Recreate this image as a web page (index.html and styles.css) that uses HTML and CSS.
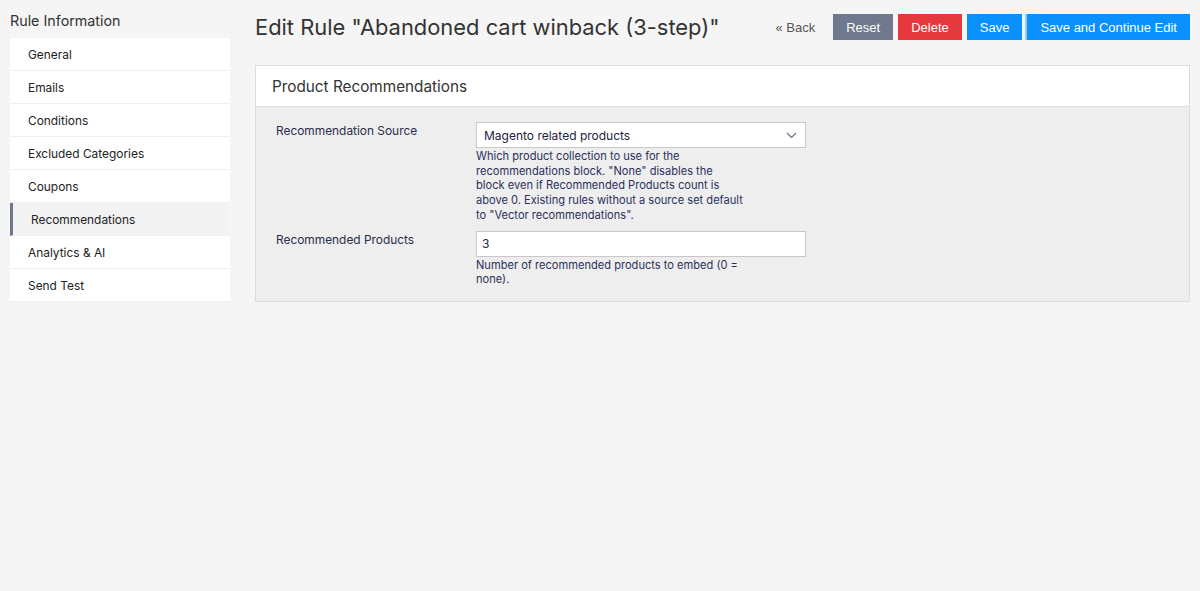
FILE: index.html
```html
<!DOCTYPE html>
<html>
<head>
<meta charset="utf-8">
<link rel="stylesheet" href="styles.css">
</head>
<body>
<div class="page">
  <aside class="sidebar">
    <div class="side-title">Rule Information</div>
    <nav class="side-nav">
      <div class="nav-item">General</div>
      <div class="nav-item">Emails</div>
      <div class="nav-item">Conditions</div>
      <div class="nav-item">Excluded Categories</div>
      <div class="nav-item">Coupons</div>
      <div class="nav-item active">Recommendations</div>
      <div class="nav-item">Analytics &amp; AI</div>
      <div class="nav-item">Send Test</div>
    </nav>
  </aside>
  <main class="main">
    <div class="topbar">
      <h1 class="title">Edit Rule "Abandoned cart winback (3-step)"</h1>
      <div class="actions">
        <span class="back">« Back</span>
        <button class="btn btn-reset">Reset</button>
        <button class="btn btn-delete">Delete</button>
        <button class="btn btn-save">Save</button>
        <button class="btn btn-save btn-continue">Save and Continue Edit</button>
      </div>
    </div>
    <section class="panel">
      <div class="panel-head">Product Recommendations</div>
      <div class="panel-body">
        <div class="field">
          <label class="label">Recommendation Source</label>
          <div class="control">
            <div class="select">
              <span>Magento related products</span>
              <svg class="chev" width="11" height="7" viewBox="0 0 11 7"><path d="M1 1 L5.5 5.5 L10 1" fill="none" stroke="#6a6f86" stroke-width="1.2"/></svg>
            </div>
            <div class="hint">Which product collection to use for the<br>recommendations block. "None" disables the<br>block even if Recommended Products count is<br>above 0. Existing rules without a source set default<br>to "Vector recommendations".</div>
          </div>
        </div>
        <div class="field">
          <label class="label">Recommended Products</label>
          <div class="control">
            <div class="input">3</div>
            <div class="hint">Number of recommended products to embed (0 =<br>none).</div>
          </div>
        </div>
      </div>
    </section>
  </main>
</div>
</body>
</html>
```

FILE: styles.css
```css
html, body {
  margin: 0;
  padding: 0;
  background: #f5f5f5;
  font-family: Inter, "Noto Sans", sans-serif;
  color: #333;
}
.page {
  display: flex;
  padding: 0 10px 0 10px;
  gap: 25px;
}
.sidebar {
  width: 220px;
  flex: none;
}
.side-title {
  font-size: 14.3px;
  color: #333;
  padding-top: 12px;
  height: 38px;
  box-sizing: border-box;
  line-height: 18px;
}
.side-nav {
  display: flex;
  flex-direction: column;
}
.nav-item {
  background: #fff;
  height: 32px;
  border-bottom: 1px solid #efefef;
  padding-left: 18px;
  display: flex;
  align-items: center;
  font-size: 11.9px;
  color: #222;
}
.nav-item.active {
  background: #f3f3f3;
  border-left: 3px solid #6f7890;
  padding-left: 18px;
}
.main {
  flex: 1;
  min-width: 0;
}
.topbar {
  display: flex;
  justify-content: space-between;
  align-items: center;
  height: 54px;
}
.title {
  margin: 0;
  font-weight: 400;
  font-size: 21.9px;
  color: #333;
  line-height: 28px;
}
.actions {
  display: flex;
  align-items: center;
  gap: 5px;
  font-family: "Liberation Sans", Arial, sans-serif;
}
.back {
  font-size: 13px;
  color: #555;
  margin-right: 13px;
}
.btn {
  border: none;
  height: 26px;
  padding: 0 13px;
  color: #fff;
  font-family: "Liberation Sans", Arial, sans-serif;
  font-size: 13px;
  border-radius: 0;
}
.btn-reset { background: #6f788d; }
.btn-delete { background: #e5393e; }
.btn-save { background: #0b90ff; }
.btn-continue {
  box-shadow: -2px 0 0 #8fccff;
}
.panel {
  margin-top: 11px;
  border: 1px solid #dcdcdc;
  background: #eeeeee;
}
.panel-head {
  background: #fff;
  height: 41px;
  box-sizing: border-box;
  border-bottom: 1px solid #dcdcdc;
  padding-left: 16px;
  display: flex;
  align-items: center;
  font-size: 15.3px;
  color: #333;
}
.panel-body {
  padding: 15px 20px 14px 20px;
  display: flex;
  flex-direction: column;
  gap: 8px;
}
.field {
  display: flex;
}
.label {
  width: 200px;
  flex: none;
  font-size: 11.9px;
  color: #2a2d4c;
  padding-top: 1px;
}
.control {
  width: 330px;
}
.select, .input {
  height: 26px;
  box-sizing: border-box;
  background: #fff;
  border: 1px solid #c8c8c8;
  display: flex;
  align-items: center;
  justify-content: space-between;
  padding: 0 8px 0 7px;
  font-size: 12px;
  color: #1e2244;
}
.input { padding-left: 5px; }
.chev { margin-top: 1px; }
.hint {
  width: 290px;
  font-size: 11.1px;
  line-height: 14.7px;
  color: #2b3060;
  margin-top: 1px;
}
```
